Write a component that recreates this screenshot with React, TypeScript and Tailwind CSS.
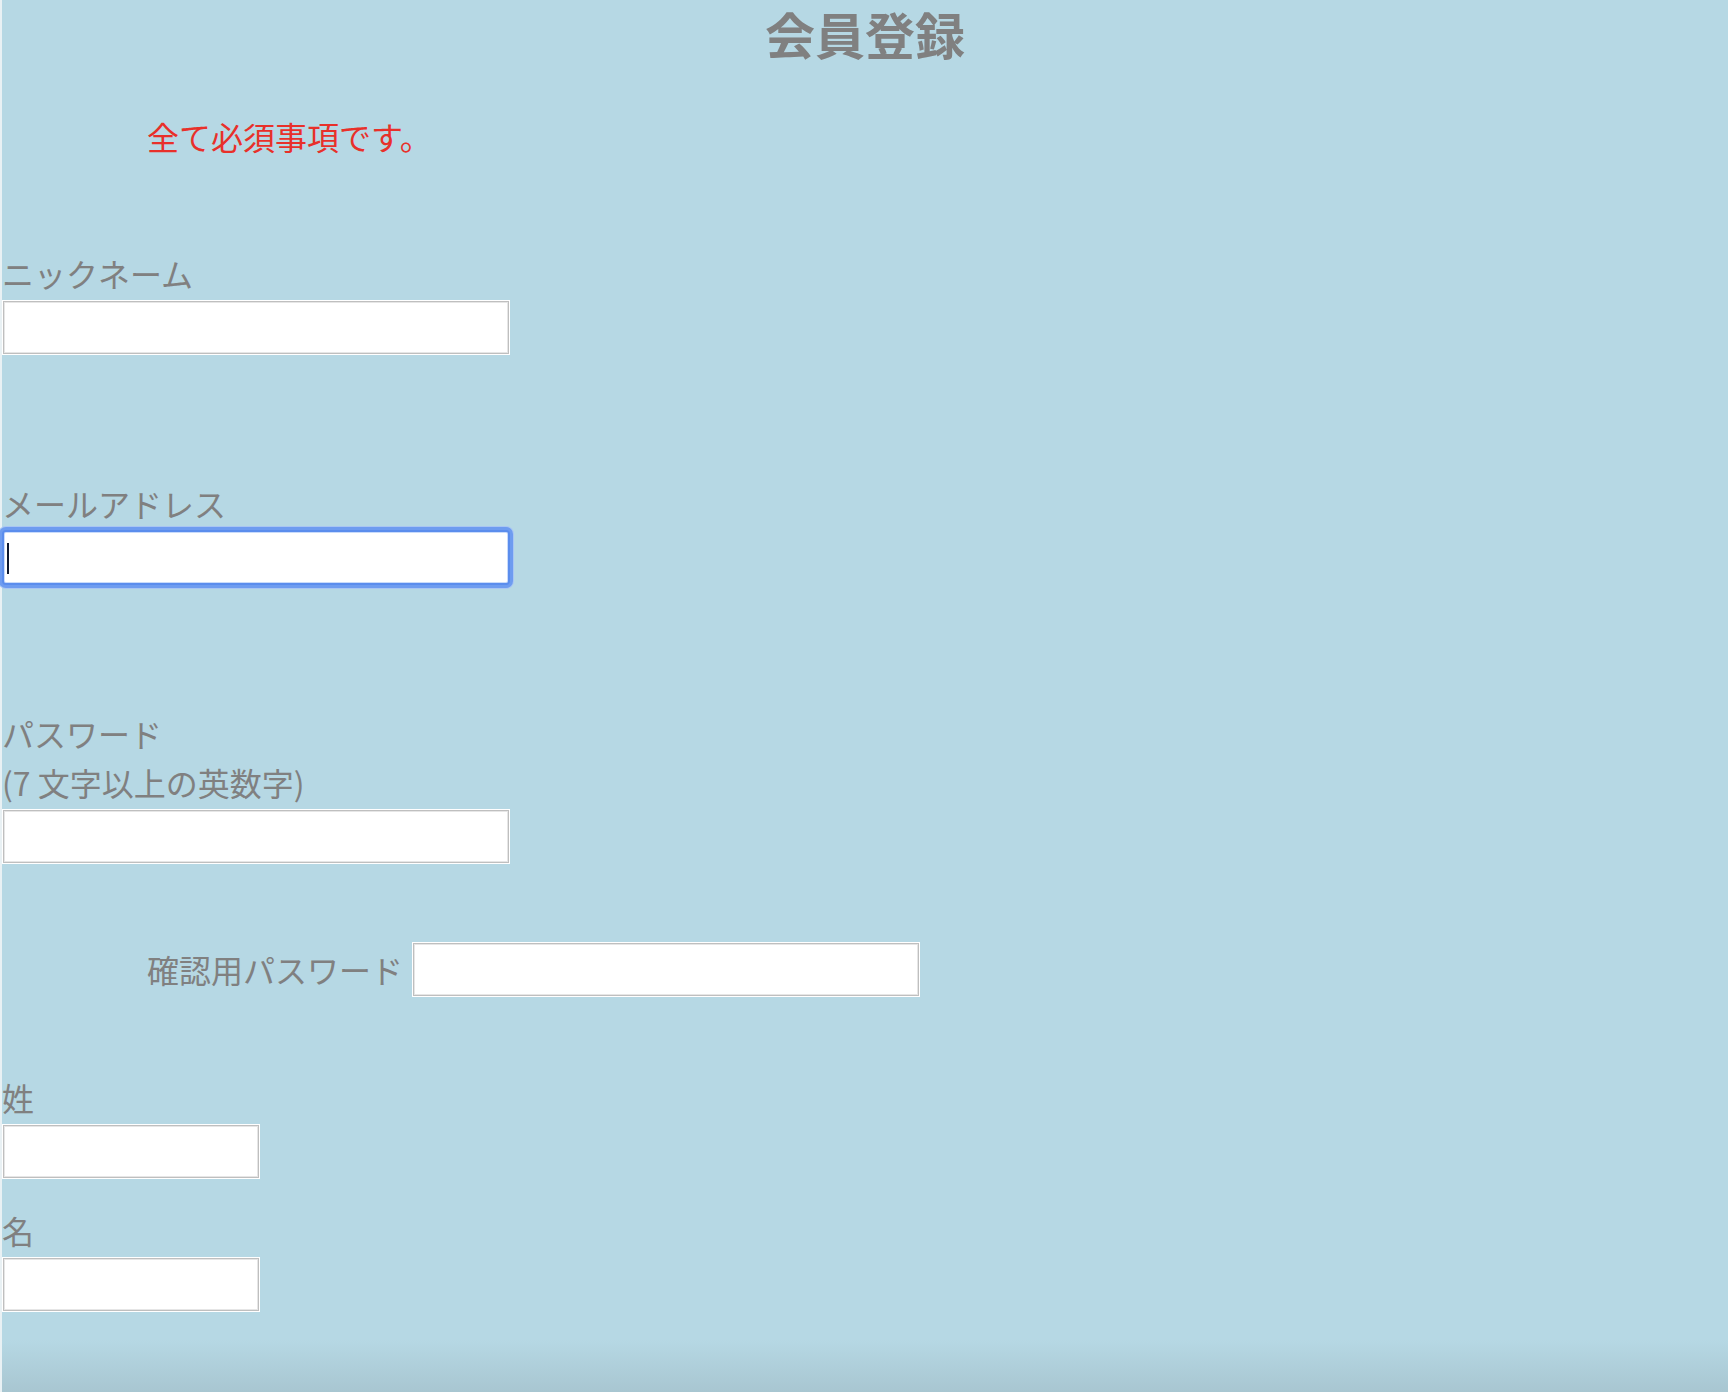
import React from 'react';

const fieldBox =
  'block h-[55px] border border-white bg-white shadow-[inset_0_0_0_1px_#bfbfbf,inset_0_0_0_2px_#e6e6e6] outline-none';

const Label: React.FC<{ children: React.ReactNode; className?: string }> = ({ children, className }) => (
  <div className={`pb-[4px] text-[32px] leading-[45px] text-[#808080] ${className ?? ''}`}>{children}</div>
);

const App: React.FC = () => {
  return (
    <div
      className="flex min-h-screen bg-[#b6d8e4]"
      style={{ fontFamily: '"Noto Sans CJK JP", "Noto Sans", sans-serif' }}
    >
      {/* thin left edge */}
      <div className="w-[2px] bg-[#e9f1f4]" />

      <div className="flex flex-1 flex-col">
        <h1 className="pb-[4px] text-center text-[50px] font-bold leading-[66px] text-[#808080]">会員登録</h1>

        <p className="mt-[42px] pl-[145px] text-[32px] leading-[48px] text-[#e8302a]">全て必須事項です。</p>

        {/* nickname */}
        <Label className="mt-[91px]">ニックネーム</Label>
        <input type="text" className={`${fieldBox} w-[508px]`} />

        {/* email - focused */}
        <Label className="mt-[126px]">メールアドレス</Label>
        <div className="relative w-[508px]">
          <input
            type="email"
            className="block h-[55px] w-[508px] rounded-[4px] border-2 border-[#5b8ded] bg-white shadow-[0_0_0_3px_#6e9cf0,0_0_0_4px_#a9c6f3,inset_0_0_0_1px_#c9dbfb] outline-none"
          />
          <span className="pointer-events-none absolute left-[5px] top-[13px] h-[31px] w-[2px] bg-[#0b1630]" />
        </div>

        {/* password */}
        <div className="mt-[126px] text-[32px] text-[#808080]">
          <div className="pb-[4px] leading-[45px]">パスワード</div>
          <div className="pb-[4px] leading-[45px]">(7 文字以上の英数字)</div>
        </div>
        <input type="password" className={`${fieldBox} w-[508px]`} />

        {/* confirm password */}
        <div className="mt-[78px] flex items-center gap-[9px] pl-[145px]">
          <span className="text-[32px] leading-[49px] text-[#808080]">確認用パスワード</span>
          <input type="password" className={`${fieldBox} w-[508px]`} />
        </div>

        {/* last name */}
        <Label className="mt-[78px]">姓</Label>
        <input type="text" className={`${fieldBox} w-[258px]`} />

        {/* first name */}
        <Label className="mt-[29px]">名</Label>
        <input type="text" className={`${fieldBox} w-[258px]`} />

        <div className="min-h-[80px] flex-1 bg-[linear-gradient(to_bottom,#b6d8e4_35%,#a8c6d1)]" />
      </div>
    </div>
  );
};

export default App;
